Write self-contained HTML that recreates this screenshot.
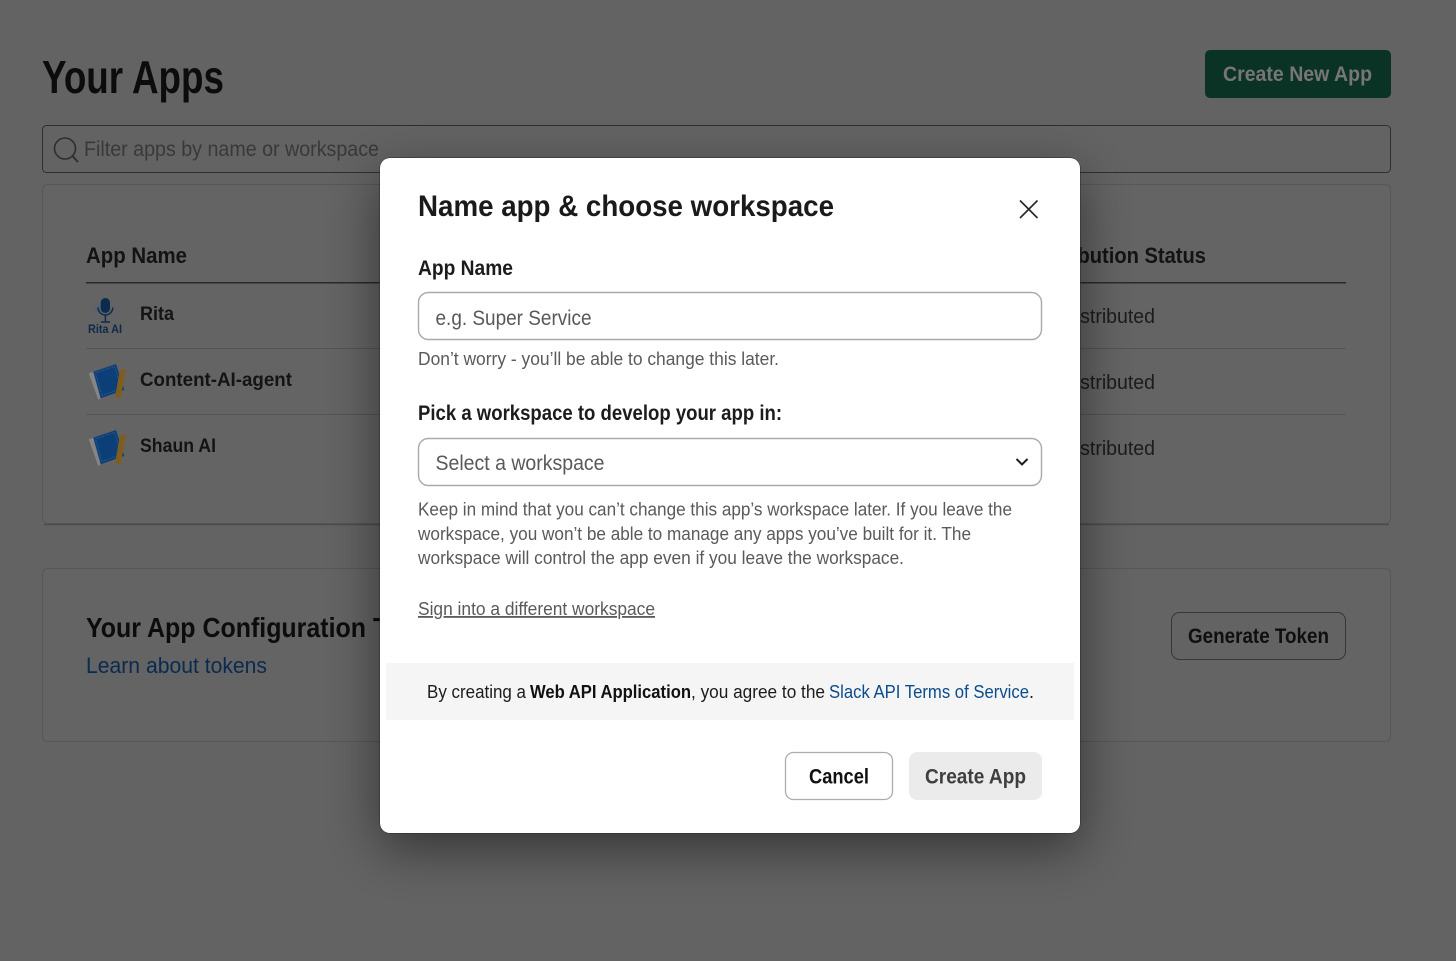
<!DOCTYPE html>
<html lang="en"><head><meta charset="utf-8"><title>Your Apps</title>
<style>
html,body{margin:0;padding:0;background:#636363;width:1456px;height:961px;overflow:hidden}
svg{display:block}
text{font-family:"Liberation Sans",sans-serif;white-space:pre}
.b{font-weight:700}
</style></head><body>
<svg width="1456" height="961" viewBox="0 0 1456 961" xmlns="http://www.w3.org/2000/svg">
<defs>
<filter id="sh" x="-30%" y="-30%" width="160%" height="170%"><feGaussianBlur stdDeviation="26"/></filter>
<g id="book">
<path d="M88.7 373.3 L93.3 371.7 L100.7 398.3 L98.3 400Z" fill="#858585"/>
<path d="M93.3 371.7 L116 364 L124.3 390 L100.7 398.3Z" fill="#0c3f78"/>
<path d="M95.5 373 L114.5 366.5 L121.5 388.5 L102 395.5Z" fill="none" stroke="#3f6a9c" stroke-width=".6" stroke-dasharray="1.5 1"/>
<path d="M120 369.3 L126 369.3 L120.7 398.3 L115 397.3Z" fill="#7d5e1f"/>
</g>
</defs>
<rect width="1456" height="961" fill="#636363"/>

<text class="b" x="42" y="93" font-size="46" fill="#0c0c0c" textLength="182" lengthAdjust="spacingAndGlyphs">Your Apps</text>
<rect x="1205" y="50" width="186" height="48" rx="5" fill="#0a3325"/>
<text class="b" x="1223" y="81" font-size="21" fill="#767676" textLength="149" lengthAdjust="spacingAndGlyphs">Create New App</text>

<rect x="42.5" y="125.5" width="1348" height="47" rx="4" fill="#636363" stroke="#2f2f2f" stroke-width="1"/>
<circle cx="65" cy="148.5" r="10.5" fill="none" stroke="#2e2e2e" stroke-width="1.6"/>
<path d="M72 155.5 L78 162" stroke="#2e2e2e" stroke-width="2" fill="none"/>
<text x="84" y="156" font-size="21" fill="#393939" textLength="295" lengthAdjust="spacingAndGlyphs">Filter apps by name or workspace</text>

<rect x="42.5" y="184.5" width="1348" height="339" rx="5" fill="#646464" stroke="#575757"/>
<path d="M44 524.5 H1389" stroke="#4d4d4d" stroke-width="1.5"/>
<text class="b" x="86" y="263" font-size="22" fill="#131313" textLength="101" lengthAdjust="spacingAndGlyphs">App Name</text>
<text class="b" x="1026" y="263" font-size="22" fill="#131313" textLength="180" lengthAdjust="spacingAndGlyphs">Distribution Status</text>
<rect x="86" y="282" width="1260" height="1.5" fill="#2a2a2a"/>
<rect x="86" y="348" width="1260" height="1" fill="#545454"/>
<rect x="86" y="414" width="1260" height="1" fill="#545454"/>

<g>
<path d="M100.5 304.5 L92 309 L100.5 313.5Z" fill="#4f6579"/>
<rect x="100.7" y="298" width="9.3" height="15" rx="4.6" fill="#0b2c4f"/>
<path d="M98 307.5 a7.4 7.4 0 0 0 14.8 0 M105.4 315 V321.5 M101 322 H110" fill="none" stroke="#0b2c4f" stroke-width="1.5"/>
<text class="b" x="88" y="333" font-size="12" fill="#0d2a4a" textLength="34" lengthAdjust="spacingAndGlyphs">Rita AI</text>
</g>
<use href="#book"/>
<use href="#book" y="66"/>

<text class="b" x="140" y="320" font-size="19.5" fill="#141414" textLength="34" lengthAdjust="spacingAndGlyphs">Rita</text>
<text class="b" x="140" y="386" font-size="19.5" fill="#141414" textLength="152" lengthAdjust="spacingAndGlyphs">Content-AI-agent</text>
<text class="b" x="140" y="452" font-size="19.5" fill="#141414" textLength="76" lengthAdjust="spacingAndGlyphs">Shaun AI</text>
<text x="1040" y="323" font-size="20" fill="#1c1c1c" textLength="115" lengthAdjust="spacingAndGlyphs">Undistributed</text>
<text x="1040" y="389" font-size="20" fill="#1c1c1c" textLength="115" lengthAdjust="spacingAndGlyphs">Undistributed</text>
<text x="1040" y="455" font-size="20" fill="#1c1c1c" textLength="115" lengthAdjust="spacingAndGlyphs">Undistributed</text>

<rect x="42.5" y="568.5" width="1348" height="173" rx="5" fill="#646464" stroke="#575757"/>
<text class="b" x="86" y="637" font-size="28" fill="#0c0c0c" textLength="280" lengthAdjust="spacingAndGlyphs">Your App Configuration</text>
<text class="b" x="373" y="637" font-size="28" fill="#0c0c0c">Tokens</text>
<text x="86" y="673" font-size="22" fill="#0a2a4e" textLength="181" lengthAdjust="spacingAndGlyphs">Learn about tokens</text>
<rect x="1171.5" y="612.5" width="174" height="47" rx="8" fill="#636363" stroke="#363636"/>
<text class="b" x="1188" y="643" font-size="21" fill="#0f0f0f" textLength="141" lengthAdjust="spacingAndGlyphs">Generate Token</text>

<rect x="380" y="176" width="700" height="672" rx="8" fill="#000" opacity=".48" filter="url(#sh)"/>
<rect x="379.5" y="157.5" width="701" height="676" rx="10.5" fill="#2c2c2c"/>
<rect x="380" y="158" width="700" height="675" rx="10" fill="#fff"/>

<text class="b" x="418" y="216" font-size="30" fill="#1a1a1a" textLength="416" lengthAdjust="spacingAndGlyphs">Name app &amp; choose workspace</text>
<path d="M1020 200.5 L1037.5 218 M1037.5 200.5 L1020 218" stroke="#2a2a2a" stroke-width="1.7" fill="none"/>

<text class="b" x="418" y="275" font-size="21" fill="#1d1c1d" textLength="95" lengthAdjust="spacingAndGlyphs">App Name</text>
<rect x="418.5" y="292.5" width="623" height="47" rx="10" fill="#fff" stroke="#a9a9a9" stroke-width="1.4"/>
<text x="435.5" y="325" font-size="21" fill="#595959" textLength="156" lengthAdjust="spacingAndGlyphs">e.g. Super Service</text>
<text x="418" y="365" font-size="18" fill="#5a5a5a" textLength="361" lengthAdjust="spacingAndGlyphs">Don’t worry - you’ll be able to change this later.</text>

<text class="b" x="418" y="420" font-size="21" fill="#1d1c1d" textLength="364" lengthAdjust="spacingAndGlyphs">Pick a workspace to develop your app in:</text>
<rect x="418.5" y="438.5" width="623" height="47" rx="10" fill="#fff" stroke="#a9a9a9" stroke-width="1.4"/>
<text x="435.5" y="470" font-size="21" fill="#595959" textLength="169" lengthAdjust="spacingAndGlyphs">Select a workspace</text>
<path d="M1016.5 459 L1022 464.5 L1027.5 459" fill="none" stroke="#1d1c1d" stroke-width="2"/>

<text x="418" y="515.5" font-size="18" fill="#5a5a5a" textLength="594" lengthAdjust="spacingAndGlyphs">Keep in mind that you can’t change this app’s workspace later. If you leave the</text>
<text x="418" y="540" font-size="18" fill="#5a5a5a" textLength="553" lengthAdjust="spacingAndGlyphs">workspace, you won’t be able to manage any apps you’ve built for it. The</text>
<text x="418" y="564" font-size="18" fill="#5a5a5a" textLength="486" lengthAdjust="spacingAndGlyphs">workspace will control the app even if you leave the workspace.</text>

<text x="418" y="615" font-size="18" fill="#5a5a5a" textLength="237" lengthAdjust="spacingAndGlyphs" text-decoration="underline">Sign into a different workspace</text>

<rect x="386" y="663" width="688" height="57" fill="#f5f5f5"/>
<text x="427" y="698" font-size="18" fill="#1d1c1d" textLength="99" lengthAdjust="spacingAndGlyphs">By creating a</text>
<text class="b" x="530" y="698" font-size="18" fill="#111" textLength="161" lengthAdjust="spacingAndGlyphs">Web API Application</text>
<text x="691" y="698" font-size="18" fill="#1d1c1d" textLength="134" lengthAdjust="spacingAndGlyphs">, you agree to the</text>
<text x="829" y="698" font-size="18" fill="#0b4c8c" textLength="200" lengthAdjust="spacingAndGlyphs">Slack API Terms of Service</text>
<text x="1029" y="698" font-size="18" fill="#1d1c1d">.</text>

<rect x="785.5" y="752.5" width="107" height="47" rx="8" fill="#fff" stroke="#adadad" stroke-width="1.3"/>
<text class="b" x="809" y="783.5" font-size="21" fill="#111" textLength="60" lengthAdjust="spacingAndGlyphs">Cancel</text>
<rect x="909" y="752" width="133" height="48" rx="8" fill="#ebebeb"/>
<text class="b" x="925" y="783.5" font-size="21" fill="#3f3f42" textLength="101" lengthAdjust="spacingAndGlyphs">Create App</text>
</svg>
</body></html>
